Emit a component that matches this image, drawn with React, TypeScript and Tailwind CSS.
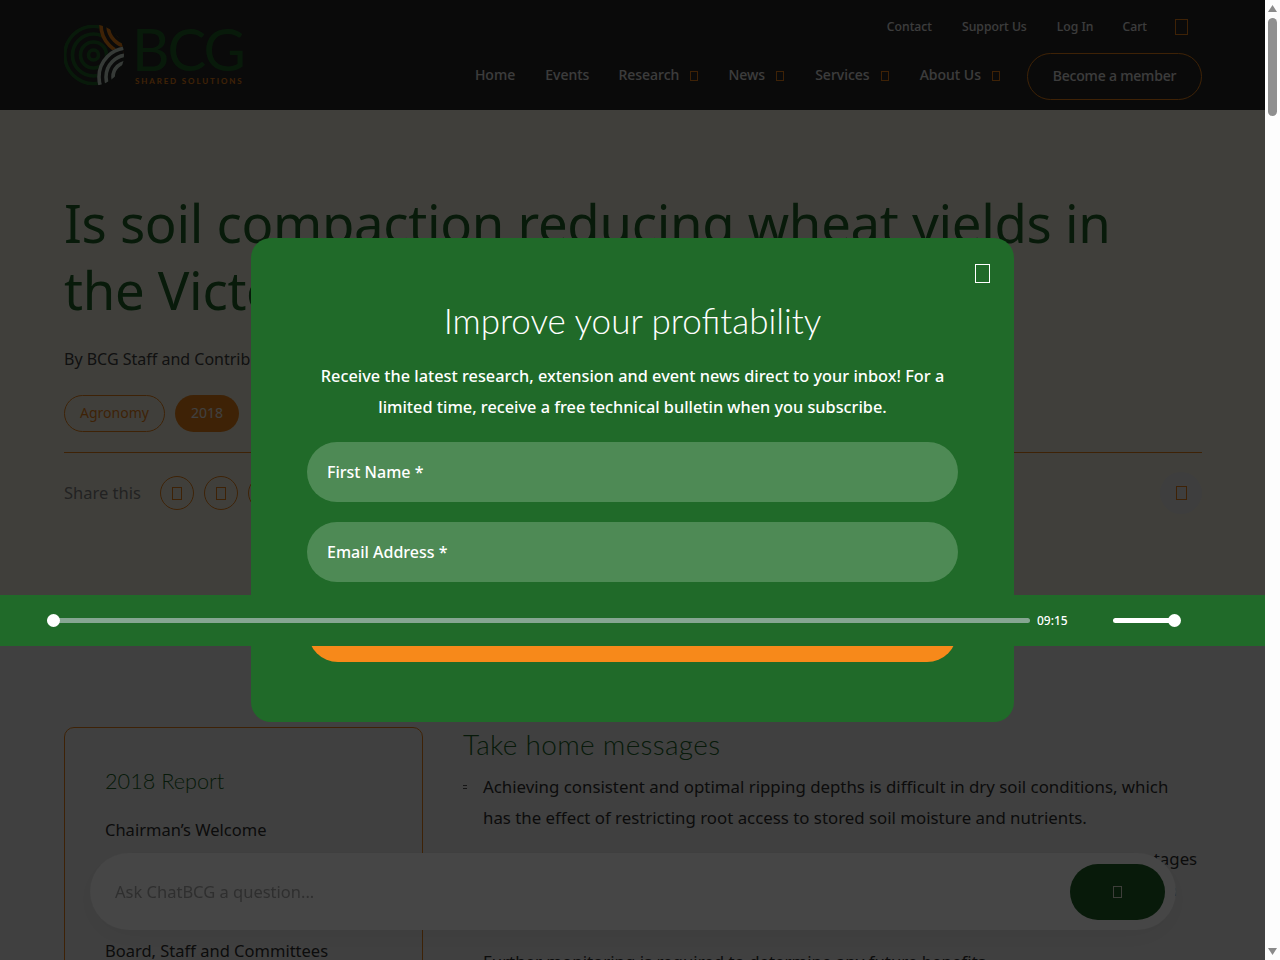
import React from "react";

const bodyFont = "font-['Noto_Sans',sans-serif]";
const headFont = "font-['Lato',sans-serif]";

// missing icon font glyph, shows as an empty box in the page
function Tofu({ className }: { className: string }) {
  return <span className={`inline-block border shrink-0 ${className}`} />;
}

function Logo() {
  return (
    <div className="flex items-start gap-[9px]">
      <svg width="62" height="62" viewBox="0 0 62 62" fill="none" className="mt-[25px]">
        <defs>
          <clipPath id="logoClip">
            <circle cx="29.5" cy="30" r="30.5" />
          </clipPath>
        </defs>
        <g clipPath="url(#logoClip)" strokeWidth="3.6">
          <g stroke="#206a29">
            <circle cx="29.5" cy="30" r="5" />
            <circle cx="29.5" cy="30" r="13" />
            <circle cx="29.5" cy="30" r="21" />
            <circle cx="29.5" cy="30" r="28.8" />
          </g>
          <circle cx="66" cy="0" r="31" fill="#282828" />
          <g stroke="#f7891a">
            <circle cx="66" cy="0" r="29" />
            <circle cx="66" cy="0" r="22" />
            <circle cx="66" cy="0" r="15" />
          </g>
          <circle cx="64" cy="52" r="31" fill="#282828" />
          <g stroke="#d5e5da">
            <circle cx="64" cy="52" r="29" />
            <circle cx="64" cy="52" r="22" />
            <circle cx="64" cy="52" r="15" />
            <circle cx="64" cy="52" r="8" />
          </g>
        </g>
      </svg>
      <div className="flex flex-col mt-[19px]">
        <span className={`${headFont} text-[58px] leading-[60px] font-normal text-[#206a29] tracking-[-2px] ml-[-3px]`}>BCG</span>
        <span className={`${headFont} text-[8px] leading-[10px] font-bold tracking-[1.85px] text-[#f7891a] mt-[-3px] whitespace-nowrap`}>
          SHARED SOLUTIONS
        </span>
      </div>
    </div>
  );
}

function Header() {
  return (
    <header className={`h-[110px] bg-[#282828] pl-[64px] pr-[63px] flex justify-between ${bodyFont}`}>
      <Logo />
      <div className="flex flex-col items-end">
        <div className="flex items-center text-[12.2px] font-medium text-[#f0f0f0] mt-[18px] h-[18px] pr-[14px]">
          <a className="mr-[30px]">Contact</a>
          <a className="mr-[30px]">Support Us</a>
          <a className="mr-[29px]">Log In</a>
          <a className="mr-[28px]">Cart</a>
          <Tofu className="w-[13px] h-[16px] border-[#f7891a]" />
        </div>
        <div className="flex items-center text-[14px] font-medium text-[#f0f0f0] mt-[17px]">
          <a className="mr-[30px] mb-[4px]">Home</a>
          <a className="mr-[29px] mb-[4px]">Events</a>
          <a className="mb-[4px]">Research</a>
          <Tofu className="w-[8px] h-[10px] ml-[11px] mr-[30px] mb-[1px] border-[#f7891a]" />
          <a className="mb-[4px]">News</a>
          <Tofu className="w-[8px] h-[10px] ml-[11px] mr-[31px] mb-[1px] border-[#f7891a]" />
          <a className="mb-[4px]">Services</a>
          <Tofu className="w-[8px] h-[10px] ml-[11px] mr-[31px] mb-[1px] border-[#f7891a]" />
          <a className="mb-[4px]">About Us</a>
          <Tofu className="w-[8px] h-[10px] ml-[11px] mr-[27px] mb-[1px] border-[#f7891a]" />
          <button className="w-[175px] h-[47px] pb-[2px] rounded-full border border-[#f7891a] text-[#f0f0f0] font-medium tracking-[-0.2px]">
            Become a member
          </button>
        </div>
      </div>
    </header>
  );
}

function Hero() {
  return (
    <section className={`bg-[#fffcec] h-[490px] pl-[64px] pr-[63px] pt-[79px] ${bodyFont}`}>
      <h1 className="text-[52.7px] leading-[67px] font-normal text-[#206a29] tracking-[-0.3px]">
        Is soil compaction reducing wheat yields in the Victorian Mallee?
      </h1>
      <p className="mt-[23px] text-[16px] leading-[26px] text-[#444]">By BCG Staff and Contributors</p>
      <div className="flex gap-[10px] mt-[23px]">
        <span className="h-[37px] pb-[2px] px-[15px] rounded-full border border-[#f7891a] text-[#f7891a] text-[14px] flex items-center">
          Agronomy
        </span>
        <span className="h-[37px] pb-[2px] px-[16px] rounded-full bg-[#f7891a] text-white text-[14px] flex items-center">2018</span>
      </div>
      <div className="mt-[20px] border-t border-[#f7891a]" />
      <div className="flex items-center justify-between mt-[19px]">
        <div className="flex items-center">
          <span className="text-[16.5px] text-[#888] w-[96px]">Share this</span>
          <div className="flex gap-[10px]">
            {[0, 1, 2].map((i) => (
              <span key={i} className="w-[34px] h-[34px] rounded-full border border-[#f7891a] flex items-center justify-center">
                <Tofu className="w-[10px] h-[13px] border-[#f7891a]" />
              </span>
            ))}
          </div>
        </div>
        <span className="w-[42px] h-[42px] rounded-full bg-[#f5f5f5] flex items-center justify-center">
          <Tofu className="w-[11px] h-[14px] border-[#f7891a]" />
        </span>
      </div>
    </section>
  );
}

function Bullet({ children }: { children: React.ReactNode }) {
  return (
    <li className="flex">
      <span className="w-[20px] shrink-0 pt-[14px]">
        <span className="block w-[4px] h-[4px] border-y border-[#555]" />
      </span>
      <span>{children}</span>
    </li>
  );
}

function Article() {
  return (
    <section className={`bg-white pl-[64px] pr-[63px] pt-[127px] pb-[200px] flex gap-[40px] items-start ${bodyFont}`}>
      <aside className="w-[359px] shrink-0 border border-[#f7891a] rounded-[10px] px-[40px] pt-[37px] pb-[60px]">
        <h3 className={`${headFont} text-[21.7px] leading-[32px] font-light text-[#206a29]`}>2018 Report</h3>
        <ul className="mt-[21px] flex flex-col gap-[36.5px] text-[16.5px] leading-[24px] text-[#333]">
          <li>Chairman’s Welcome</li>
          <li>CEO’s Report</li>
          <li>Board, Staff and Committees</li>
          <li>Research Partners</li>
        </ul>
      </aside>
      <div className="flex-1 mt-[-2px]">
        <h2 className={`${headFont} text-[28px] leading-[38px] font-light text-[#206a29] tracking-[0.3px]`}>Take home messages</h2>
        <ul className="mt-[8px] text-[16.83px] leading-[31px] text-[#333] flex flex-col gap-[10px]">
          <Bullet>
            Achieving consistent and optimal ripping depths is difficult in dry soil conditions, which
            <br />
            has the effect of restricting root access to stored soil moisture and nutrients.
          </Bullet>
          <Bullet>
            Ripping to a targeted depth of 30 cm in the Southern Mallee delivered no yield advantages in the first season, even though the compacted zone was removed across all the plots in
            the trial area.
          </Bullet>
          <Bullet>Further monitoring is required to determine any future benefits.</Bullet>
        </ul>
      </div>
    </section>
  );
}

// sits over the dimmed page, so its colours are already the dimmed ones
function ChatBar() {
  return (
    <div className={`fixed left-[90px] top-[853px] w-[1086px] h-[77px] rounded-full bg-[#464646] shadow-[0_8px_30px_rgba(0,0,0,0.06)] flex items-center justify-between pl-[25px] pr-[11px] ${bodyFont}`}>
      <span className="text-[16.5px] text-[#2f2f2f] pt-[2px]">Ask ChatBCG a question...</span>
      <span className="w-[95px] h-[56px] rounded-full bg-[#081a0a] flex items-center justify-center">
        <Tofu className="w-[9px] h-[12px] border-[#3e3e3a]" />
      </span>
    </div>
  );
}

function Modal() {
  return (
    <div className={`fixed left-[251px] top-[238px] w-[763px] h-[484px] rounded-[20px] bg-[#206a29] px-[56px] pt-[57px] text-white ${bodyFont}`}>
      <Tofu className="absolute left-[724px] top-[26px] w-[15px] h-[19px] border-white" />
      <h2 className={`${headFont} text-center text-[35px] leading-[50px] font-light`}>Improve your profitability</h2>
      <p className="mt-[16px] text-center text-[16.3px] leading-[31px] font-medium">
        Receive the latest research, extension and event news direct to your inbox! For a
        <br />
        limited time, receive a free technical bulletin when you subscribe.
      </p>
      <div className="mt-[19px] flex flex-col gap-[20px]">
        <div className="h-[60px] rounded-full bg-[#4e8a55] pl-[20px] flex items-center text-[16px] font-medium">First Name *</div>
        <div className="h-[60px] rounded-full bg-[#4e8a55] pl-[20px] flex items-center text-[16px] font-medium">Email Address *</div>
        <button className="h-[60px] mx-[1px] rounded-full bg-[#f7891a] text-white text-[16px] font-medium">Subscribe</button>
      </div>
    </div>
  );
}

function AudioBar() {
  return (
    <div className={`fixed left-0 top-[595px] w-[1265px] h-[51px] bg-[#206a29] flex items-center pl-[47px] ${bodyFont}`}>
      <div className="relative w-[983px] h-[5px] rounded-full bg-[#86a692]">
        <span className="absolute left-0 top-[-4px] w-[13px] h-[13px] rounded-full bg-white" />
      </div>
      <span className="ml-[7px] text-[12px] font-medium text-white">09:15</span>
      <div className="relative ml-[45px] w-[62px] h-[5px] rounded-full bg-white">
        <span className="absolute right-[-6px] top-[-4px] w-[13px] h-[13px] rounded-full bg-white" />
      </div>
    </div>
  );
}

function Scrollbar() {
  return (
    <div className="w-[15px] h-full shrink-0 bg-[#fdfdfd] flex flex-col items-center pt-[5px] pb-[5px]">
      <svg width="9" height="7" viewBox="0 0 9 7" fill="#8a8a8a">
        <path d="M4.5 0 9 7H0z" />
      </svg>
      <div className="w-[9px] h-[98px] mt-[6px] rounded-full bg-[#8f8f8f]" />
      <svg width="9" height="7" viewBox="0 0 9 7" fill="#8a8a8a" className="mt-auto">
        <path d="M0 0h9L4.5 7z" />
      </svg>
    </div>
  );
}

export default function App() {
  return (
    <div className="h-screen flex overflow-hidden">
      <main className="w-[1265px] shrink-0 overflow-hidden">
        <Header />
        <Hero />
        <Article />
      </main>
      <Scrollbar />
      <div className="fixed left-0 top-0 w-[1265px] h-full bg-black/75" />
      <ChatBar />
      <Modal />
      <AudioBar />
    </div>
  );
}
